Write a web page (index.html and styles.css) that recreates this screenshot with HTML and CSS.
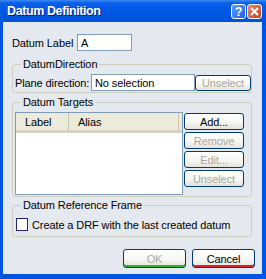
FILE: index.html
```html
<!DOCTYPE html>
<html>
<head>
  <link rel="stylesheet" href="styles.css">
</head>
<body>

  <div class="window">
    <div class="titlebar">
      <span class="title">Datum Definition</span>
      <div class="caption-btns">
        <span class="cap help">?</span>
        <span class="cap close">
          <svg width="9" height="9" viewBox="0 0 9 9"><path d="M1 1 L8 8 M8 1 L1 8" stroke="#fff" stroke-width="2"/></svg>
        </span>
      </div>
    </div>

    <div class="client">
      <div class="label-row">
        <label for="datumLabel">Datum Label</label>
        <input type="text" id="datumLabel" class="edit label-input" value="A">
      </div>

      <fieldset class="group direction">
        <legend>DatumDirection</legend>
        <div class="dir-row">
          <label for="planeDir" class="dir-label">Plane direction:</label>
          <input type="text" id="planeDir" class="edit dir-input" value="No selection">
          <button class="btn dir-btn" disabled>Unselect</button>
        </div>
      </fieldset>

      <fieldset class="group targets">
        <legend>Datum Targets</legend>
        <div class="targets-body">
          <div class="list">
            <div class="list-head">
              <span class="col col-label">Label</span>
              <span class="col col-alias">Alias</span>
            </div>
          </div>
          <div class="side-btns">
            <button class="btn">Add...</button>
            <button class="btn" disabled>Remove</button>
            <button class="btn" disabled>Edit...</button>
            <button class="btn" disabled>Unselect</button>
          </div>
        </div>
      </fieldset>

      <fieldset class="group drf">
        <legend>Datum Reference Frame</legend>
        <label class="check"><span class="box"></span>Create a DRF with the last created datum</label>
      </fieldset>

      <div class="footer">
        <button class="btn ok" disabled>OK</button>
        <button class="btn cancel">Cancel</button>
      </div>
    </div>
  </div>

</body>
</html>
```

FILE: styles.css
```css
body {
  margin: 0;
  font-family: "Liberation Sans", Arial, sans-serif;
  font-size: 11px;
  letter-spacing: -0.1px;
  color: #000;
}
.window {
  width: 266px;
  height: 279px;
  display: flex;
  flex-direction: column;
  background-color: #0054e3;
}
.titlebar {
  height: 22px;
  display: flex;
  align-items: center;
  justify-content: space-between;
  padding: 0 4px 0 7px;
  box-sizing: border-box;
  background: linear-gradient(to bottom, #3b8cf5 0, #0a5de8 3px, #0058e6 50%, #0052d9 100%);
}
.title {
  color: #fff;
  font-weight: bold;
  font-size: 12.5px;
  letter-spacing: -0.4px;
  text-shadow: 1px 1px 0 #0a1d7a;
}
.caption-btns {
  display: flex;
  gap: 1px;
  margin-top: 1px;
}
.cap {
  width: 15px;
  height: 15px;
  box-sizing: border-box;
  border: 1px solid #fff;
  border-radius: 3px;
  display: flex;
  align-items: center;
  justify-content: center;
  color: #fff;
  font-weight: bold;
  font-size: 12px;
}
.help {
  background: linear-gradient(to bottom right, #5c9cff, #1b5fe8);
}
.close {
  background: linear-gradient(to bottom right, #e6866a, #c9441c);
}
.client {
  flex: 1;
  margin: 0 4px 5px 3px;
  padding: 12px 10px 0 9px;
  background-color: #e4e9ef;
}
.label-row {
  display: flex;
  align-items: center;
  height: 17px;
}
.label-row label {
  width: 65px;
}
.edit {
  height: 17px;
  box-sizing: border-box;
  border: 1px solid #7f9db9;
  padding: 0 3px;
  margin: 0;
  font-family: inherit;
  font-size: 11px;
  letter-spacing: -0.1px;
  background-color: #fff;
  outline: none;
}
.label-input {
  width: 55px;
}
.group {
  margin: 0;
  padding: 0 0 1px 1px;
  border: 1px solid #cfcfc0;
  border-radius: 3px;
  min-width: 0;
}
.group legend {
  line-height: 14px;
  padding: 0 2px;
  margin-left: 7px;
}
.direction {
  margin-top: 6px;
}
.dir-row {
  display: flex;
  align-items: center;
  padding-top: 3px;
}
.dir-label {
  width: 77px;
  padding-left: 1px;
  box-sizing: border-box;
}
.dir-input {
  width: 104px;
}
.btn {
  height: 17px;
  box-sizing: border-box;
  border: 1px solid #003c74;
  border-radius: 3px;
  background: linear-gradient(to bottom, #ffffff 0, #f5f5f2 60%, #e3e1d8 100%);
  font-family: inherit;
  font-size: 11px;
  letter-spacing: -0.1px;
  color: #000;
  padding: 0;
  margin: 0;
}
.btn:disabled {
  color: #aca899;
}
.dir-btn {
  width: 56px;
  height: 16px;
}
.targets {
  margin-top: 2px;
}
.targets-body {
  display: flex;
  padding-top: 3px;
  gap: 1px;
}
.list {
  width: 168px;
  height: 83px;
  margin-left: 1px;
  box-sizing: border-box;
  border: 1px solid #7f9db9;
  background-color: #fff;
}
.list-head {
  height: 20px;
  display: flex;
  align-items: center;
  box-sizing: border-box;
  background-color: #ebeadb;
  border-bottom: 3px solid #d6d2c2;
}
.col {
  height: 100%;
  display: flex;
  align-items: center;
  box-sizing: border-box;
  padding-left: 9px;
}
.col-label {
  width: 53px;
  border-right: 1px solid #c7c5b2;
}
.col-alias {
  flex: 1;
  border-right: 1px solid #c7c5b2;
  margin-right: 3px;
}
.side-btns {
  display: flex;
  flex-direction: column;
  gap: 2px;
  padding-top: 1px;
}
.side-btns .btn {
  width: 60px;
}
.drf {
  margin-top: 1px;
}
.check {
  display: flex;
  align-items: center;
  gap: 4px;
  padding: 6px 0 4px 2px;
}
.box {
  width: 12px;
  height: 13px;
  box-sizing: border-box;
  border: 1px solid #23237a;
  background-color: #fff;
}
.footer {
  display: flex;
  justify-content: flex-end;
  gap: 6px;
  margin-top: 12px;
  margin-right: -3px;
}
.footer .btn {
  width: 63px;
  height: 19px;
}
.ok {
  box-shadow: inset 0 -2px 0 #2cb52c;
}
.cancel {
  box-shadow: inset 0 -2px 0 #d8232a;
}
```
